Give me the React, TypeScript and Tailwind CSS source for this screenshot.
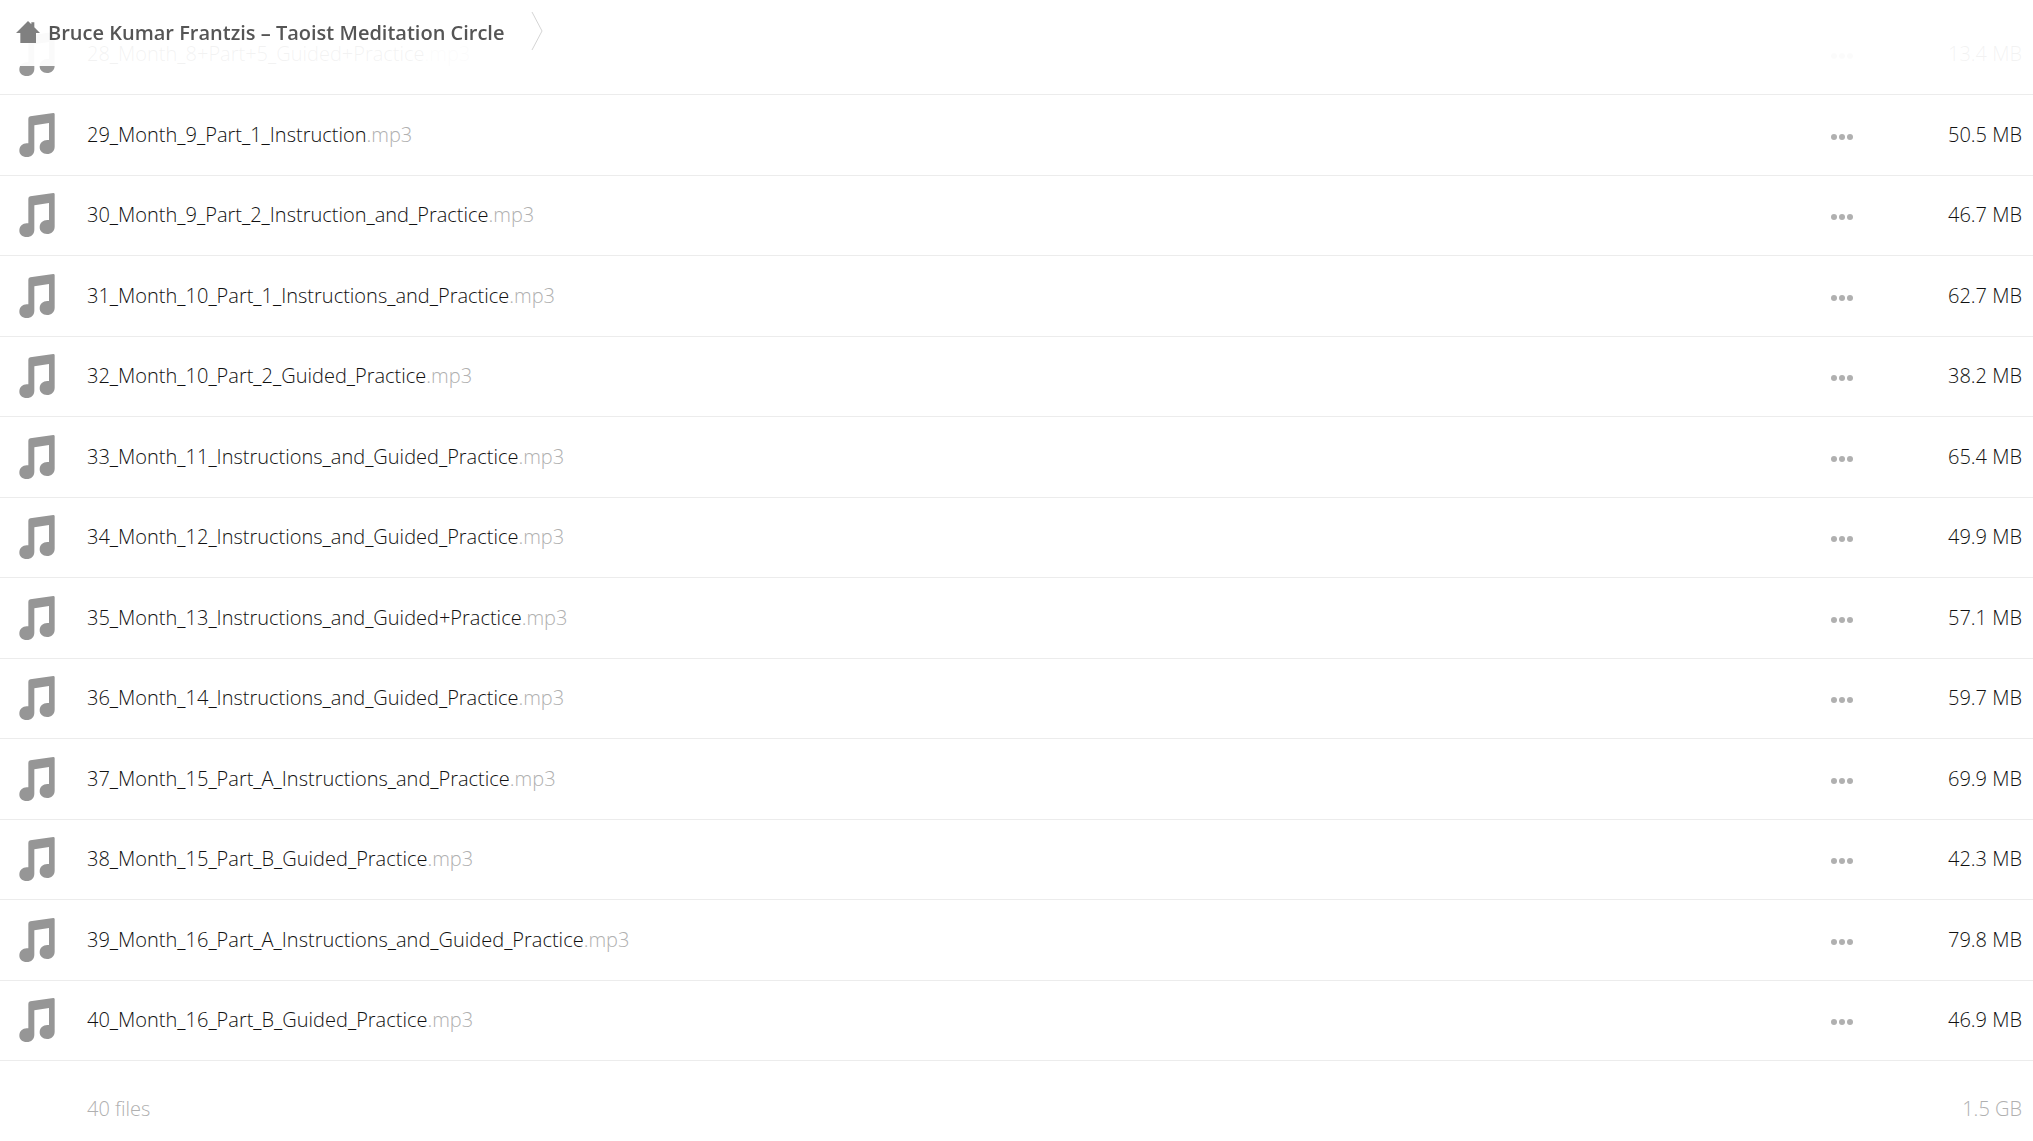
type FileItem = { name: string; size: string };

const files: FileItem[] = [
  { name: '28_Month_8+Part+5_Guided+Practice', size: '13.4 MB' },
  { name: '29_Month_9_Part_1_Instruction', size: '50.5 MB' },
  { name: '30_Month_9_Part_2_Instruction_and_Practice', size: '46.7 MB' },
  { name: '31_Month_10_Part_1_Instructions_and_Practice', size: '62.7 MB' },
  { name: '32_Month_10_Part_2_Guided_Practice', size: '38.2 MB' },
  { name: '33_Month_11_Instructions_and_Guided_Practice', size: '65.4 MB' },
  { name: '34_Month_12_Instructions_and_Guided_Practice', size: '49.9 MB' },
  { name: '35_Month_13_Instructions_and_Guided+Practice', size: '57.1 MB' },
  { name: '36_Month_14_Instructions_and_Guided_Practice', size: '59.7 MB' },
  { name: '37_Month_15_Part_A_Instructions_and_Practice', size: '69.9 MB' },
  { name: '38_Month_15_Part_B_Guided_Practice', size: '42.3 MB' },
  { name: '39_Month_16_Part_A_Instructions_and_Guided_Practice', size: '79.8 MB' },
  { name: '40_Month_16_Part_B_Guided_Practice', size: '46.9 MB' },
];

function HomeIcon() {
  return (
    <svg viewBox="0 0 72 66" className="mb-0.5 h-[22px] w-6 fill-[#808080]" aria-hidden="true">
      <path d="M36 0 L46 10 V4 H55 V19 L72 36 H60 V66 H13 V36 H0 Z" />
    </svg>
  );
}

function NoteIcon() {
  return (
    <svg viewBox="0 0 106 132" className="h-11 w-9 fill-[#969696]" aria-hidden="true">
      <path d="M27 17 Q27 11 33 10 L102 0 Q106 0 106 4 V101 C106 114 96 123 83 123 C70 123 61 115 61 103 C61 90 71 81 84 81 H89 V30 L45 37 V110 C45 123 36 132 22 132 C9 132 0 124 0 113 C0 100 10 91 22 91 H27 Z" />
    </svg>
  );
}

function Crumbs() {
  return (
    <header className="fixed inset-x-0 top-0 z-10 flex bg-white/95 pl-4">
      <nav aria-label="Breadcrumb" className="flex h-[66px] items-center">
        <a href="#home" className="flex items-center gap-2 text-[20px] font-semibold text-[#555]">
          <HomeIcon />
          Bruce Kumar Frantzis – Taoist Meditation Circle
        </a>
        <svg viewBox="0 0 12 40" className="mb-1 ml-[27px] h-10 w-3 fill-none stroke-[#d4d4d4]" aria-hidden="true">
          <path d="M1 1 L11 20 L1 39" />
        </svg>
      </nav>
    </header>
  );
}

function FileRow({ file }: { file: FileItem }) {
  return (
    <tr className="border-b border-[#ececec] odd:h-20 even:h-[81px]">
      <td className="w-[87px] pl-[19px]">
        <NoteIcon />
      </td>
      <td>
        <a href={`#${file.name}`}>
          {file.name}
          <span className="text-[#b0b0b0]">.mp3</span>
        </a>
      </td>
      <td className="w-10 pt-1">
        <button type="button" aria-label={`Actions for ${file.name}`} className="flex h-8 w-full items-center justify-center gap-0.5">
          <span className="size-1.5 rounded-full bg-[#b0b0b0]" />
          <span className="size-1.5 rounded-full bg-[#b0b0b0]" />
          <span className="size-1.5 rounded-full bg-[#b0b0b0]" />
        </button>
      </td>
      <td className="w-[171px] pr-[11px] text-right">{file.size}</td>
    </tr>
  );
}

export default function App() {
  return (
    <div className="min-h-screen bg-white font-['Open_Sans',sans-serif] text-[20px] font-light text-[#111]">
      <Crumbs />
      <main className="pt-[14px]">
        <table className="w-full border-collapse">
          <tbody>
            {files.map((file) => (
              <FileRow key={file.name} file={file} />
            ))}
          </tbody>
          <tfoot>
            <tr className="h-[82px] text-[#b0b0b0]">
              <td />
              <td className="pt-4">40 files</td>
              <td />
              <td className="pt-4 pr-[11px] text-right">1.5 GB</td>
            </tr>
          </tfoot>
        </table>
      </main>
    </div>
  );
}
